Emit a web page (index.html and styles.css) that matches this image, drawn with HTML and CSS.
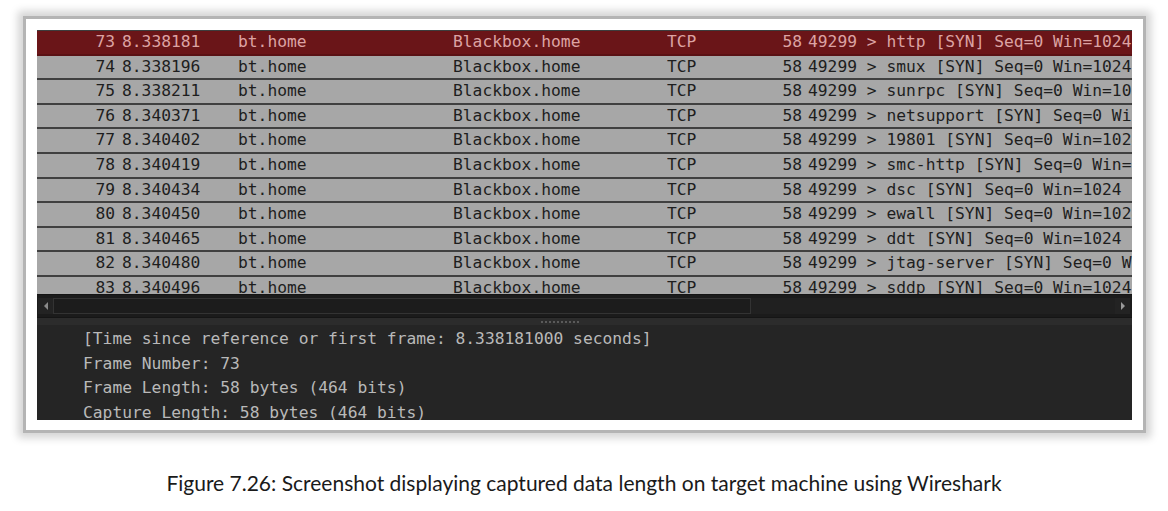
FILE: index.html
```html
<!DOCTYPE html>
<html>
<head>
<meta charset="utf-8">
<link rel="stylesheet" href="styles.css">
</head>
<body>
<div class="page">
  <div class="frame">
    <div class="screen">
      <div class="packets">
        <div class="row selected"><span class="no">73</span><span class="time">8.338181</span><span class="src">bt.home</span><span class="dst">Blackbox.home</span><span class="proto">TCP</span><span class="len">58</span><span class="info">49299 &gt; http [SYN] Seq=0 Win=1024</span></div>
        <div class="row"><span class="no">74</span><span class="time">8.338196</span><span class="src">bt.home</span><span class="dst">Blackbox.home</span><span class="proto">TCP</span><span class="len">58</span><span class="info">49299 &gt; smux [SYN] Seq=0 Win=1024</span></div>
        <div class="row"><span class="no">75</span><span class="time">8.338211</span><span class="src">bt.home</span><span class="dst">Blackbox.home</span><span class="proto">TCP</span><span class="len">58</span><span class="info">49299 &gt; sunrpc [SYN] Seq=0 Win=1024</span></div>
        <div class="row"><span class="no">76</span><span class="time">8.340371</span><span class="src">bt.home</span><span class="dst">Blackbox.home</span><span class="proto">TCP</span><span class="len">58</span><span class="info">49299 &gt; netsupport [SYN] Seq=0 Win=1024</span></div>
        <div class="row"><span class="no">77</span><span class="time">8.340402</span><span class="src">bt.home</span><span class="dst">Blackbox.home</span><span class="proto">TCP</span><span class="len">58</span><span class="info">49299 &gt; 19801 [SYN] Seq=0 Win=1024</span></div>
        <div class="row"><span class="no">78</span><span class="time">8.340419</span><span class="src">bt.home</span><span class="dst">Blackbox.home</span><span class="proto">TCP</span><span class="len">58</span><span class="info">49299 &gt; smc-http [SYN] Seq=0 Win=1024</span></div>
        <div class="row"><span class="no">79</span><span class="time">8.340434</span><span class="src">bt.home</span><span class="dst">Blackbox.home</span><span class="proto">TCP</span><span class="len">58</span><span class="info">49299 &gt; dsc [SYN] Seq=0 Win=1024</span></div>
        <div class="row"><span class="no">80</span><span class="time">8.340450</span><span class="src">bt.home</span><span class="dst">Blackbox.home</span><span class="proto">TCP</span><span class="len">58</span><span class="info">49299 &gt; ewall [SYN] Seq=0 Win=1024</span></div>
        <div class="row"><span class="no">81</span><span class="time">8.340465</span><span class="src">bt.home</span><span class="dst">Blackbox.home</span><span class="proto">TCP</span><span class="len">58</span><span class="info">49299 &gt; ddt [SYN] Seq=0 Win=1024</span></div>
        <div class="row"><span class="no">82</span><span class="time">8.340480</span><span class="src">bt.home</span><span class="dst">Blackbox.home</span><span class="proto">TCP</span><span class="len">58</span><span class="info">49299 &gt; jtag-server [SYN] Seq=0 Win=1024</span></div>
        <div class="row"><span class="no">83</span><span class="time">8.340496</span><span class="src">bt.home</span><span class="dst">Blackbox.home</span><span class="proto">TCP</span><span class="len">58</span><span class="info">49299 &gt; sddp [SYN] Seq=0 Win=1024</span></div>
      </div>
      <div class="hscroll">
        <div class="arrow left"><svg width="6" height="8" viewBox="0 0 6 8"><path d="M5 0 L1 4 L5 8 Z" fill="#8a8a8a"/></svg></div>
        <div class="thumb"></div>
        <div class="trough"></div>
        <div class="arrow right"><svg width="6" height="8" viewBox="0 0 6 8"><path d="M1 0 L5 4 L1 8 Z" fill="#9a9a9a"/></svg></div>
      </div>
      <div class="splitter"><span class="grip"></span></div>
      <div class="details">
        <div class="line">[Time since reference or first frame: 8.338181000 seconds]</div>
        <div class="line">Frame Number: 73</div>
        <div class="line">Frame Length: 58 bytes (464 bits)</div>
        <div class="line">Capture Length: 58 bytes (464 bits)</div>
      </div>
    </div>
  </div>
  <p class="caption">Figure 7.26: Screenshot displaying captured data length on target machine using Wireshark</p>
</div>
</body>
</html>
```

FILE: styles.css
```css
html, body {
  margin: 0;
  padding: 0;
  background: #ffffff;
}

.page {
  width: 1168px;
  height: 511px;
  overflow: hidden;
  padding-top: 19px;
  box-sizing: border-box;
}

.frame {
  margin-left: 26px;
  width: 1117px;
  height: 411px;
  box-sizing: border-box;
  padding: 11px 11px 10px 11px;
  background: #ffffff;
  box-shadow: 0 0 0 3px #b4b4b4, 0 0 8px 8px #d4d4d4;
}

.screen {
  width: 1095px;
  height: 390px;
  background: #252525;
  display: flex;
  flex-direction: column;
  overflow: hidden;
  font-family: "DejaVu Sans Mono", "Liberation Mono", monospace;
  font-size: 16.3px;
}

.packets {
  height: 264px;
  flex: none;
  overflow: hidden;
  padding-top: 1px;
  box-sizing: border-box;
  background: #3d3d3d;
}

.row {
  display: grid;
  grid-template-columns: 78px 123px 215px 214px 108px 33px 1fr;
  height: 24.6px;
  box-sizing: border-box;
  border-bottom: 2px solid #404040;
  background: #a7a7a7;
  color: #1e1e1e;
  line-height: 22.6px;
  white-space: nowrap;
}

.row.selected {
  background: #6a1518;
  color: #dca3a3;
  border-bottom-color: #5a1114;
}

.row span {
  overflow: hidden;
}

.no {
  text-align: right;
}

.time {
  padding-left: 7px;
}

.len {
  text-align: right;
  padding-right: 6px;
}

.info {
  overflow: hidden;
}

.hscroll {
  height: 23px;
  flex: none;
  display: flex;
  align-items: stretch;
  background: #1b1b1b;
  padding: 3px 2px 3px 1px;
  box-sizing: border-box;
  border-top: 1px solid #141414;
}

.arrow {
  width: 15px;
  display: flex;
  align-items: center;
  justify-content: center;
  background: #232323;
}

.thumb {
  width: 698px;
  background: #1c1c1c;
  border: 1px solid #333333;
  box-sizing: border-box;
}

.trough {
  flex: 1;
  background: #202020;
}

.splitter {
  height: 7px;
  flex: none;
  background: #2c2c2c;
  border-top: 1px solid #151515;
  display: flex;
  justify-content: center;
  align-items: center;
  padding-right: 50px;
}

.grip {
  width: 38px;
  height: 2px;
  background: repeating-linear-gradient(90deg, #5a5a5a 0 2px, transparent 2px 4px);
}

.details {
  flex: 1;
  padding: 2px 0 0 46px;
  color: #b9b9b9;
  line-height: 24.6px;
  white-space: nowrap;
  overflow: hidden;
}

.caption {
  margin: 41px 0 0 0;
  text-align: center;
  font-family: Lato, "Open Sans", sans-serif;
  font-size: 21px;
  color: #1a1a1a;
  line-height: 24px;
}
```
